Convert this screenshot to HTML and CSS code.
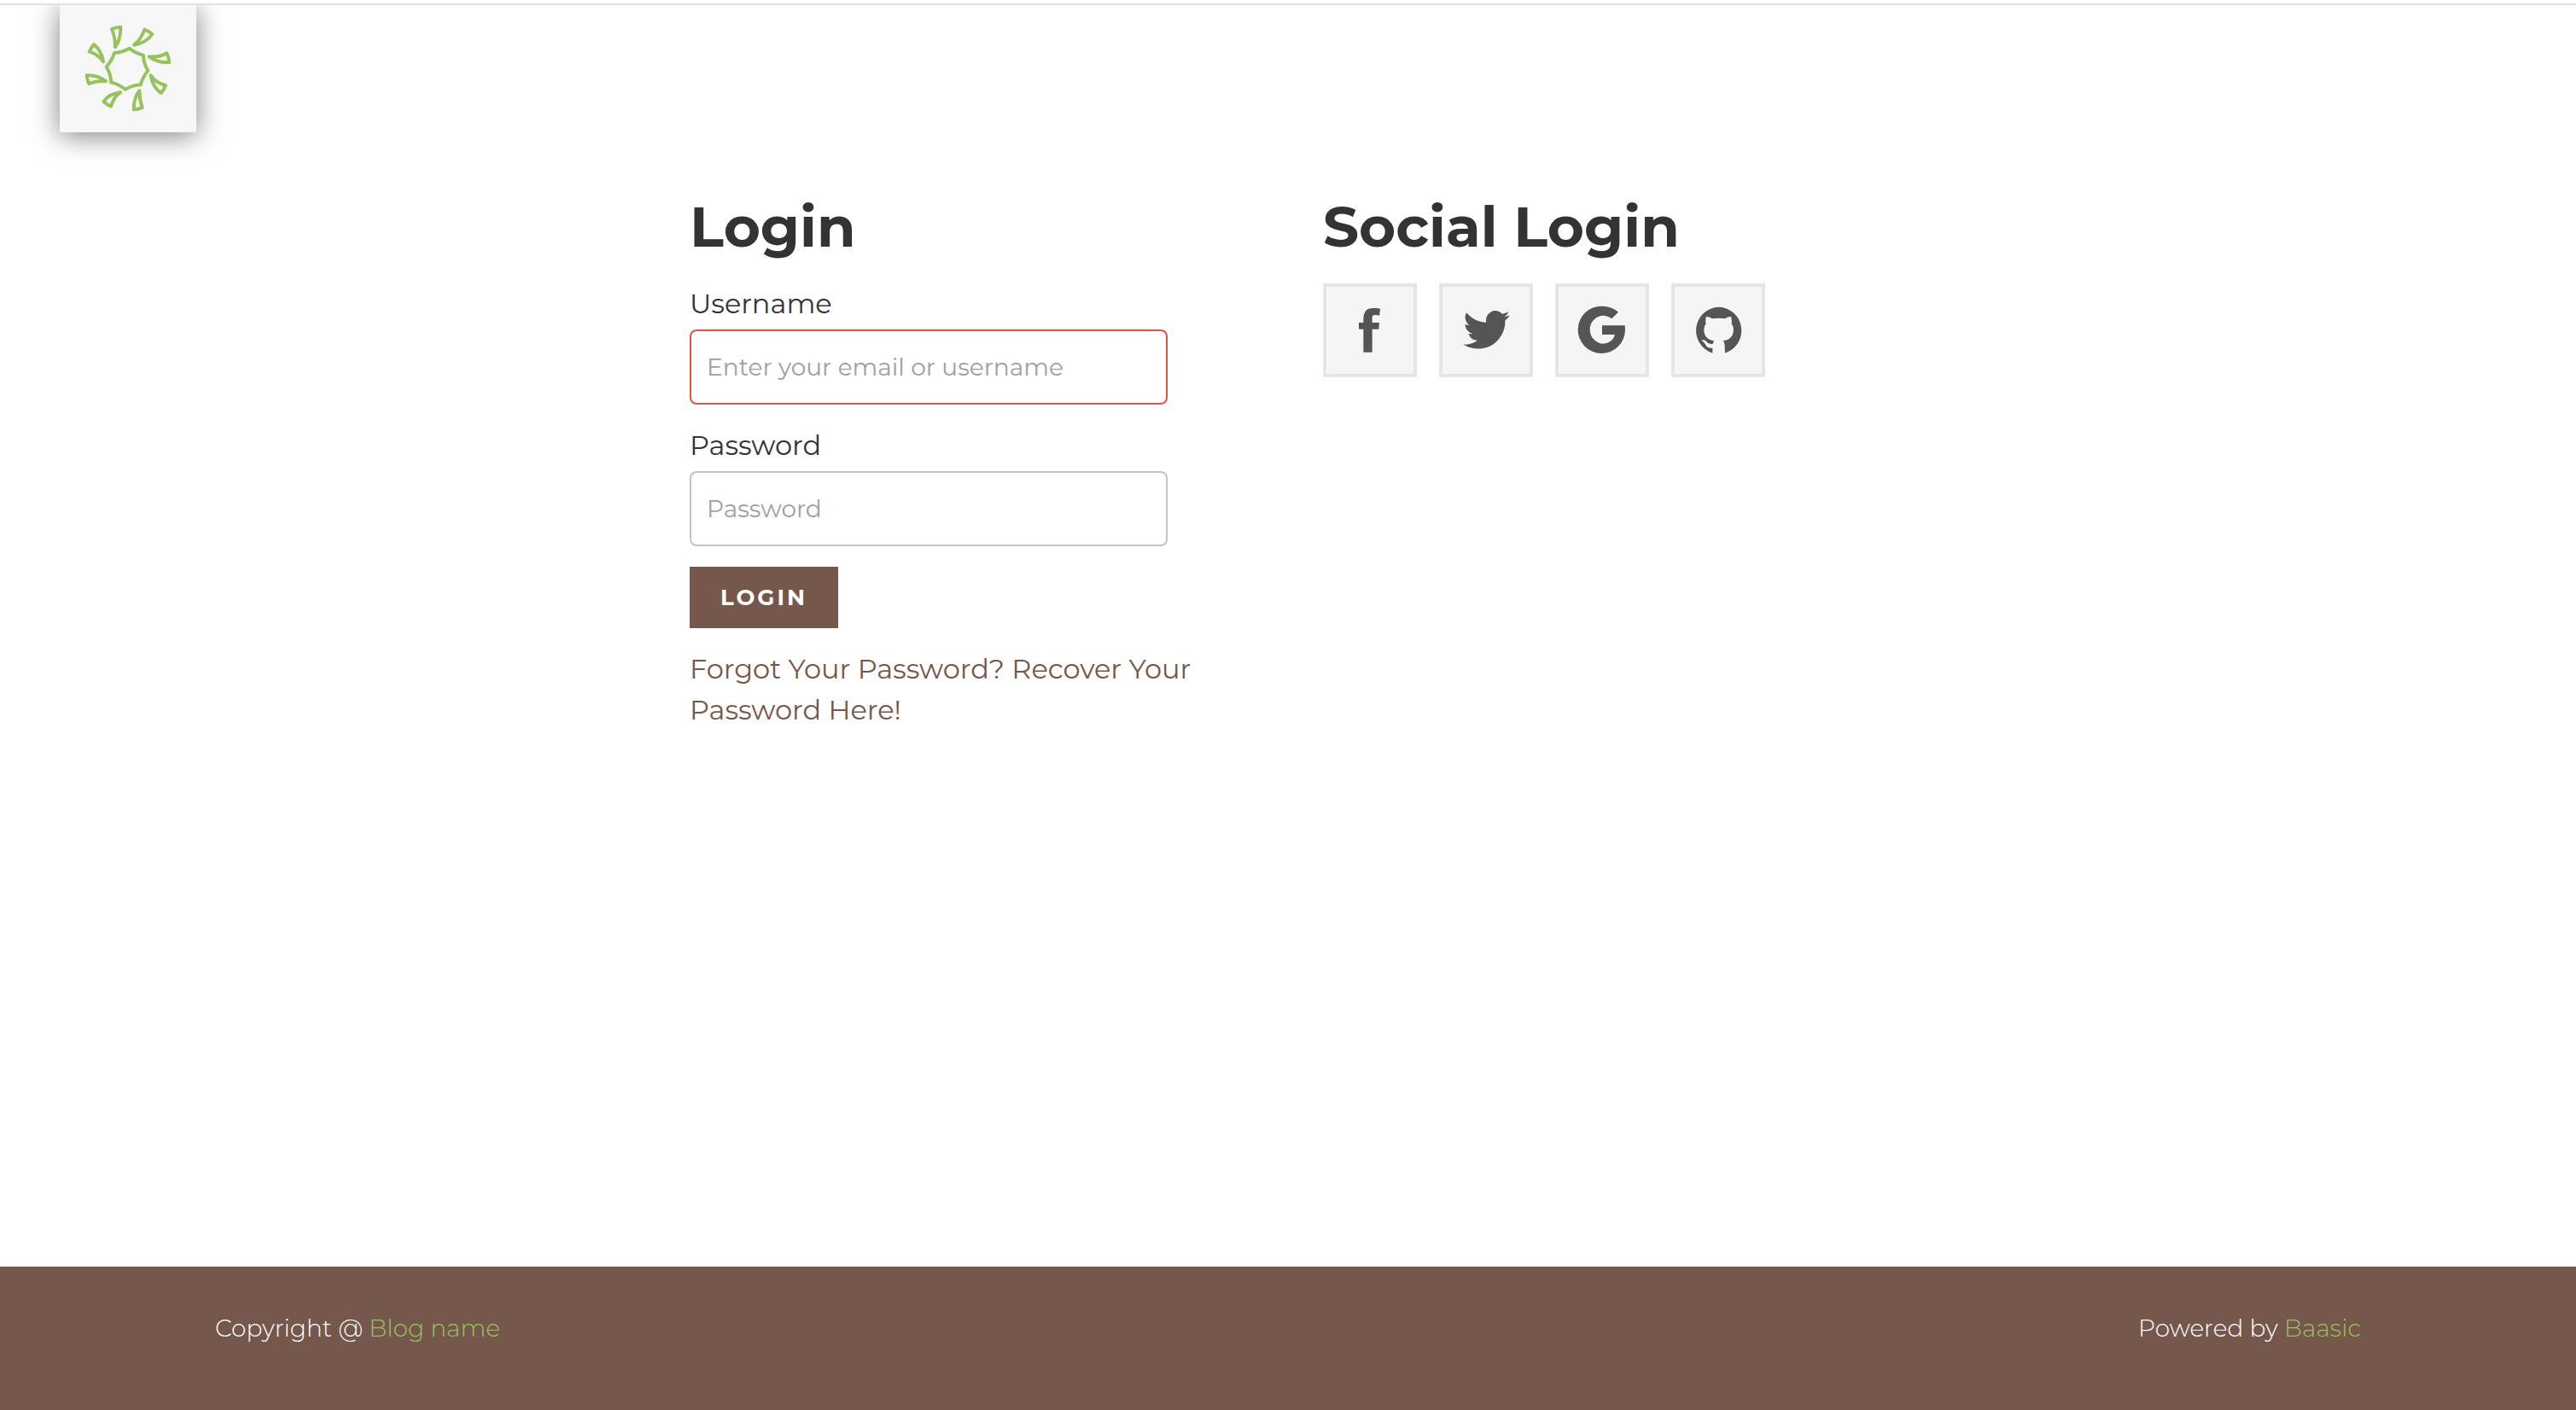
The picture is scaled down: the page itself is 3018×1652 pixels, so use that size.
FILE: index.html
```html
<!DOCTYPE html>
<html lang="en">
<head>
<meta charset="utf-8">
<meta name="viewport" content="width=device-width, initial-scale=1">
<title>Login</title>
<link rel="stylesheet" href="styles.css">
</head>
<body>
<header class="header">
  <a class="logo" href="#" aria-label="Home">
    <svg class="logo__icon" viewBox="90 18 480 447" aria-hidden="true">
      <path d="M334 170Q358 188 384 194Q384 222 400 248Q382 270 374 298Q346 300 320 314Q298 296 270 289Q270 260 254 235Q274 212 282 186Q308 184 334 170Z"/>
      <path d="M273 102Q288 95 304 95Q304 140 285 165Q285 130 273 102Z"/>
      <path d="M388 104Q402 109 415 120Q395 150 351 158Q375 140 388 104Z"/>
      <path d="M466 187Q474 202 475 219Q435 222 404 199Q438 203 466 187Z"/>
      <path d="M462 300Q457 315 446 327Q415 305 410 265Q428 292 462 300Z"/>
      <path d="M380 378Q366 385 350 385Q350 345 370 319Q370 350 380 378Z"/>
      <path d="M270 374Q256 368 244 357Q262 330 303 325Q280 340 270 374Z"/>
      <path d="M193 294Q186 280 185 265Q220 262 252 285Q218 283 193 294Z"/>
      <path d="M194 182Q200 168 210 156Q238 180 243 217Q224 190 194 182Z"/>
    </svg>
  </a>
</header>
<main class="main">
  <section class="column">
    <h1 class="title">Login</h1>
    <form class="form">
      <label class="label" for="username">Username</label>
      <input class="input input--error" id="username" type="text" placeholder="Enter your email or username">
      <label class="label" for="password">Password</label>
      <input class="input" id="password" type="password" placeholder="Password">
      <button class="btn" type="submit">LOGIN</button>
    </form>
    <a class="recover" href="#">Forgot Your Password? Recover Your Password Here!</a>
  </section>
  <section class="column">
    <h2 class="title">Social Login</h2>
    <div class="social">
      <button class="social__btn" type="button" aria-label="Facebook">
        <svg viewBox="42 48 306 306" aria-hidden="true"><path d="M172 278V197H156V174H172V163C172 136 183 123 206 123Q222 122 231 125L228 149Q220 147 214 147C205 147 203 151 203 159V174H228L226 197H203V278Z"/></svg>
      </button>
      <button class="social__btn" type="button" aria-label="Twitter">
        <svg viewBox="-10.7 -10.1 44.8 44.8" aria-hidden="true"><path d="M23.953 4.57a10 10 0 01-2.825.775 4.958 4.958 0 002.163-2.723c-.951.555-2.005.959-3.127 1.184a4.92 4.92 0 00-8.384 4.482C7.69 8.095 4.067 6.13 1.64 3.162a4.822 4.822 0 00-.666 2.475c0 1.71.87 3.213 2.188 4.096a4.904 4.904 0 01-2.228-.616v.06a4.923 4.923 0 003.946 4.827 4.996 4.996 0 01-2.212.085 4.936 4.936 0 004.604 3.417 9.867 9.867 0 01-6.102 2.105c-.39 0-.779-.023-1.17-.067a13.995 13.995 0 007.557 2.209c9.053 0 13.998-7.496 13.998-13.985 0-.21 0-.42-.015-.63A9.935 9.935 0 0024 4.59z"/></svg>
      </button>
      <button class="social__btn" type="button" aria-label="Google">
        <svg viewBox="51 48 306 306" aria-hidden="true"><path d="M204 116A83 83 0 1 0 285 199Q285 191 284 184H204V216H249C244 236 228 248 204 248A50 50 0 0 1 204 149Q224 149 238 160L261 137Q237 116 204 116Z"/></svg>
      </button>
      <button class="social__btn" type="button" aria-label="GitHub">
        <svg viewBox="459 48 306 306" aria-hidden="true"><path d="M614 119A83 83 0 0 0 592 281V263Q575 266 568 252Q562 241 553 236Q564 232 571 241Q578 252 594 248Q594 241 598 238C575 235 562 222 562 198Q562 186 569 178Q566 164 570 153Q580 153 591 160Q614 156 636 160Q648 152 657 153Q661 165 659 178Q666 186 666 198C666 222 653 235 629 238Q636 244 635 256L636 281A83 83 0 0 0 614 119Z"/></svg>
      </button>
    </div>
  </section>
</main>
<footer class="footer">
  <p class="footer__text">Copyright @ <a class="footer__link" href="#">Blog name</a></p>
  <p class="footer__text">Powered by <a class="footer__link" href="#">Baasic</a></p>
</footer>
</body>
</html>
```
FILE: styles.css
```css
* {
  box-sizing: border-box;
}

body {
  display: flex;
  flex-direction: column;
  min-height: 100vh;
  margin: 0;
  background: #fff;
  color: #333;
  font-family: Montserrat, Inter, sans-serif;
  font-size: 32px;
  line-height: 48px;
}

.header {
  display: flex;
  height: 230px;
  margin-top: 4px;
  padding-left: 70px;
  border-top: 2px solid #e1e1e1;
  overflow: hidden;
}

.logo {
  width: 160px;
  height: 149px;
  background: #f7f7f7;
  box-shadow: 0 4px 30px rgba(0, 0, 0, 0.5);
}

.logo__icon {
  display: block;
  width: 100%;
  height: 100%;
  fill: none;
  stroke: #97c25e;
  stroke-width: 12;
  stroke-linejoin: round;
}

.main {
  display: grid;
  grid-template-columns: 1fr 1fr;
  flex: 1;
  gap: 82px;
  width: 100%;
  max-width: 1402px;
  margin: 0 auto;
}

.title {
  margin: 0 0 34px;
  font-size: 66px;
  font-weight: 700;
  line-height: 64px;
}

.form {
  display: flex;
  flex-direction: column;
  align-items: flex-start;
  max-width: 560px;
}

.label {
  margin-bottom: 6px;
}

.input {
  width: 100%;
  height: 88px;
  margin-bottom: 24px;
  padding: 0 18px;
  border: 2px solid #c3c3c3;
  border-radius: 8px;
  background: #fff;
  color: #333;
  font: inherit;
  font-size: 28px;
}

.input--error {
  border-color: #e05243;
}

.input::placeholder {
  color: #9f9f9f;
  opacity: 1;
}

.btn {
  height: 72px;
  margin-bottom: 24px;
  padding: 0 36px;
  border: 0;
  background: #75574b;
  color: #fff;
  font: inherit;
  font-size: 26px;
  font-weight: 700;
  letter-spacing: 3px;
}

.recover {
  color: #75574b;
  text-decoration: none;
}

.social {
  display: flex;
  gap: 26px;
}

.social__btn {
  width: 110px;
  height: 110px;
  padding: 0;
  border: 4px solid #e5e5e5;
  background: #f5f5f5;
  fill: #555;
}

.social__btn svg {
  display: block;
}

.footer {
  display: flex;
  justify-content: space-between;
  padding: 48px 252px 72px;
  background: #75574b;
  color: #fff;
  font-size: 28px;
  font-weight: 300;
}

.footer__text {
  margin: 0;
}

.footer__link {
  color: #97c25e;
  text-decoration: none;
}
```
